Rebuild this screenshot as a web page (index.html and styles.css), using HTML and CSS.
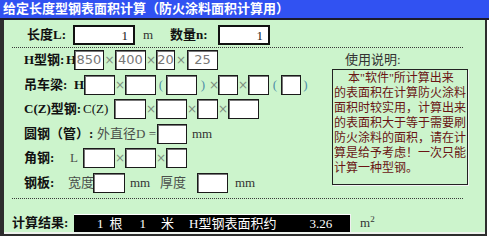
FILE: index.html
```html
<!DOCTYPE html>
<html lang="zh-CN">
<head>
	<meta charset="UTF-8">
	<title>给定长度型钢表面积计算</title>
	<link rel="stylesheet" href="styles.css">
</head>
<body>
	<div class="title">给定长度型钢表面积计算（防火涂料面积计算用）</div>
	<div class="panel">
		<div class="row1">
			<span class="lab w46">长度L:</span>
			<span class="ipt big w62 right">1</span>
			<span class="unit w35 pl8">m</span>
			<span class="lab w48">数量n:</span>
			<span class="ipt big w52 right">1</span>
		</div>
		<div class="dots"></div>
		<div class="middle">
			<div class="left">
				<div class="row">
					<span class="lab w41">H型钢:</span>
					<span class="pre bold w9 pl1">H</span>
					<span class="ipt w30">850</span><span class="x w11">×</span>
					<span class="ipt w31">400</span><span class="x w10">×</span>
					<span class="ipt w19">20</span><span class="x w12">×</span>
					<span class="ipt w31">25</span>
				</div>
				<div class="row">
					<span class="lab w50">吊车梁:</span>
					<span class="pre bold w10">H</span>
					<span class="ipt w31"></span><span class="x w10">×</span>
					<span class="ipt w31"></span><span class="par w10">(</span>
					<span class="ipt w31"></span><span class="par w12">)</span><span class="x w9">×</span>
					<span class="ipt w20"></span><span class="x w10">×</span>
					<span class="ipt w21"></span><span class="par w12">(</span>
					<span class="ipt w20"></span><span class="par w9">)</span>
				</div>
				<div class="row">
					<span class="lab w58">C(Z)型钢:</span>
					<span class="pre w32 pl1">C(Z)</span>
					<span class="ipt w32"></span><span class="x w10">×</span>
					<span class="ipt w31"></span><span class="x w10">×</span>
					<span class="ipt w21"></span><span class="x w10">×</span>
					<span class="ipt w31"></span>
				</div>
				<div class="row">
					<span class="lab w73">圆钢（管）:</span>
					<span class="sub w60">外直径D =</span>
					<span class="ipt w30"></span>
					<span class="unit pl5">mm</span>
				</div>
				<div class="row">
					<span class="lab w46">角钢:</span>
					<span class="sub w13">L</span>
					<span class="ipt w32"></span><span class="x w10">×</span>
					<span class="ipt w31"></span><span class="x w10">×</span>
					<span class="ipt w21"></span>
				</div>
				<div class="row">
					<span class="lab w44">钢板:</span>
					<span class="sub w25">宽度</span>
					<span class="ipt w32"></span>
					<span class="unit w35 pl5">mm</span>
					<span class="sub w37">厚度</span>
					<span class="ipt w31"></span>
					<span class="unit pl7">mm</span>
				</div>
			</div>
			<div class="usage">
				<div class="usage-title">使用说明:</div>
				<div class="usage-box">
					<div class="indent">本"软件"所计算出来</div>
					<div>的表面积在计算防火涂料</div>
					<div>面积时较实用，计算出来</div>
					<div>的表面积大于等于需要刷</div>
					<div>防火涂料的面积，请在计</div>
					<div>算是给予考虑！一次只能</div>
					<div>计算一种型钢。</div>
				</div>
			</div>
		</div>
		<div class="dots dots2"></div>
		<div class="result">
			<span class="lab w62">计算结果:</span>
			<div class="screen">
				<span class="s1">1</span><span class="s2">根</span><span class="s3">1</span><span class="s4">米</span><span class="s5">H型钢表面积约</span><span class="s6">3.26</span>
			</div>
			<span class="unit pl9">m<sup>2</sup></span>
		</div>
	</div>
</body>
</html>
```
FILE: styles.css
```css
body{
	margin: 0;
	padding: 0;
	background: #fff;
	font: 13px/20px "Liberation Serif", "Noto Sans CJK SC", serif;
	color: #111;
}
.title{
	height: 18px;
	background: #3152f2;
	border-bottom: 2px solid #1b1b2b;
	color: #fff;
	font: bold 13px/18px "Liberation Serif", "Noto Sans CJK SC", serif;
	padding-left: 3px;
	white-space: nowrap;
}
.panel{
	width: 487px;
	box-sizing: border-box;
	background: #ccf4cc;
	border-left: 4px solid #2d2d2d;
	border-right: 2px solid #2d2d2d;
	border-bottom: 2px solid #2d2d2d;
	box-shadow: inset 0 -2px 0 #eef3ee;
	padding: 5px 0 2px 0;
}
.row1, .row, .result{
	display: flex;
	align-items: center;
	height: 20px;
	white-space: nowrap;
}
.row1{
	padding-left: 23px;
}
.row{
	padding-left: 20px;
}
.lab{
	font-weight: bold;
	color: #111;
}
.ipt{
	display: block;
	height: 20px;
	box-sizing: border-box;
	background: #fff;
	border: 1px solid #1a1a1a;
	box-shadow: inset 1px 1px 0 #777;
	font: 13px/18px "DejaVu Sans", "Liberation Sans", sans-serif;
	color: #777;
	text-align: center;
}
.ipt.big{
	border: 2px solid #111;
	box-shadow: none;
	font: 13px/17px "Liberation Serif", serif;
	color: #222;
}
.right{
	text-align: right !important;
	padding-right: 5px;
}
.unit{
	color: #333;
}
.sub{
	color: #4a4f4a;
}
.pre{
	color: #111;
}
.bold{
	font-weight: bold;
}
.x{
	color: #7e8e80;
	text-align: center;
	font-family: "DejaVu Sans", sans-serif;
	font-size: 12px;
}
.par{
	color: #4f8fa8;
	text-align: center;
}
.w9{width:9px}.w10{width:10px}.w11{width:11px}.w12{width:12px}.w13{width:13px}
.w19{width:19px}.w20{width:20px}.w21{width:21px}.w25{width:25px}
.w30{width:30px}.w31{width:31px}.w32{width:32px}.w35{width:35px}.w37{width:37px}
.w41{width:41px}.w44{width:44px}.w46{width:46px}.w48{width:48px}
.w50{width:50px}.w52{width:52px}.w58{width:58px}.w60{width:60px}
.w62{width:62px}.w73{width:73px}
.w9,.w10,.w11,.w12,.w13,.w19,.w20,.w21,.w25,.w30,.w31,.w32,.w35,.w37,
.w41,.w44,.w46,.w48,.w50,.w52,.w58,.w60,.w62,.w73{
	flex: none;
	box-sizing: border-box;
}
.pl1{padding-left:1px}
.pl5{padding-left:5px}
.pl7{padding-left:7px}
.pl8{padding-left:8px}
.pl9{padding-left:9px}
.dots{
	margin: 2px 0 0 8px;
	width: 451px;
	border-top: 1px dotted #3a3a3a;
}
.dots2{
	margin-top: 4.6px;
}
.middle{
	display: flex;
	margin-top: 2px;
}
.left{
	width: 328px;
	display: flex;
	flex-direction: column;
	gap: 4.6px;
}
.usage{
	width: 136px;
}
.usage-title{
	padding: 3px 0 0 13px;
	font: 13px/14px "Liberation Serif", "Noto Sans CJK SC", serif;
	color: #333;
}
.usage-box{
	margin-top: 2px;
	height: 116px;
	box-sizing: border-box;
	border: 1px solid #222;
	box-shadow: 1px 1px 0 #f4f4f4;
	padding: 1px 0 0 1px;
	font: 12px/15px "Liberation Serif", "Noto Sans CJK SC", serif;
	color: #6a1414;
	white-space: nowrap;
	overflow: hidden;
}
.usage-box .indent{
	padding-left: 14px;
}
.result{
	margin-top: 15px;
	height: 18px;
	padding-left: 8px;
}
.screen{
	flex: none;
	width: 277px;
	height: 18px;
	box-sizing: border-box;
	background: #000;
	border-top: 1px solid #fff;
	border-right: 1px solid #eee;
	color: #fff;
	font: 13px/17px "Liberation Serif", "Noto Sans CJK SC", serif;
	display: flex;
}
.s1{margin-left:23px}
.s2{margin-left:6px}
.s3{margin-left:17px}
.s4{margin-left:15px}
.s5{margin-left:15px}
.s6{margin-left:33px}
sup{
	font-size: 9px;
	line-height: 0;
}
```
